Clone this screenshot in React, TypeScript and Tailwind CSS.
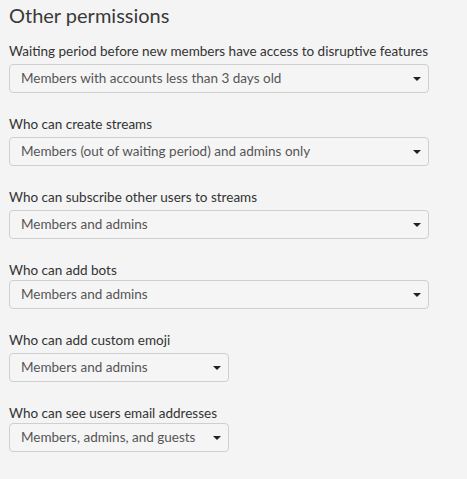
import React from "react";

const font = { fontFamily: "Lato, 'Noto Sans', sans-serif" };

function Arrow() {
  return (
    <svg width="8" height="4" viewBox="0 0 8 4" className="shrink-0">
      <path d="M0 0 H8 L4 4 Z" fill="#222" />
    </svg>
  );
}

function Select({ value, wide, gap }: { value: string; wide: boolean; gap: string }) {
  return (
    <div
      className={`${gap} ${wide ? "w-[420px]" : "w-[220px]"} h-[29px] flex items-center justify-between pl-[11px] pr-[7px] border border-[#cfcfcf] rounded-[4px] bg-[#f5f5f5] text-[13.5px] text-[#555]`}
    >
      <span>{value}</span>
      <Arrow />
    </div>
  );
}

const rows = [
  { label: "Waiting period before new members have access to disruptive features", value: "Members with accounts less than 3 days old", wide: true, gap: "mt-[3px]" },
  { label: "Who can create streams", value: "Members (out of waiting period) and admins only", wide: true, gap: "mt-[3px]" },
  { label: "Who can subscribe other users to streams", value: "Members and admins", wide: true, gap: "mt-[3px]" },
  { label: "Who can add bots", value: "Members and admins", wide: true, gap: "mt-0" },
  { label: "Who can add custom emoji", value: "Members and admins", wide: false, gap: "mt-[3px]" },
  { label: "Who can see users email addresses", value: "Members, admins, and guests", wide: false, gap: "mt-0" },
];

export default function App() {
  return (
    <div className="w-[467px] h-[479px] bg-[#f4f4f4] pl-[9px] pt-[2px] overflow-hidden" style={font}>
      <h2 className="text-[20px] leading-[26px] text-[#3a3a3a]">Other permissions</h2>
      <div className="flex flex-col">
        {rows.map((r, i) => (
          <div key={i} className={i === 0 ? "mt-[13px]" : "mt-[21px]"}>
            <div className="text-[13.5px] leading-[20px] text-[#333]">{r.label}</div>
            <Select value={r.value} wide={r.wide} gap={r.gap} />
          </div>
        ))}
      </div>
    </div>
  );
}
